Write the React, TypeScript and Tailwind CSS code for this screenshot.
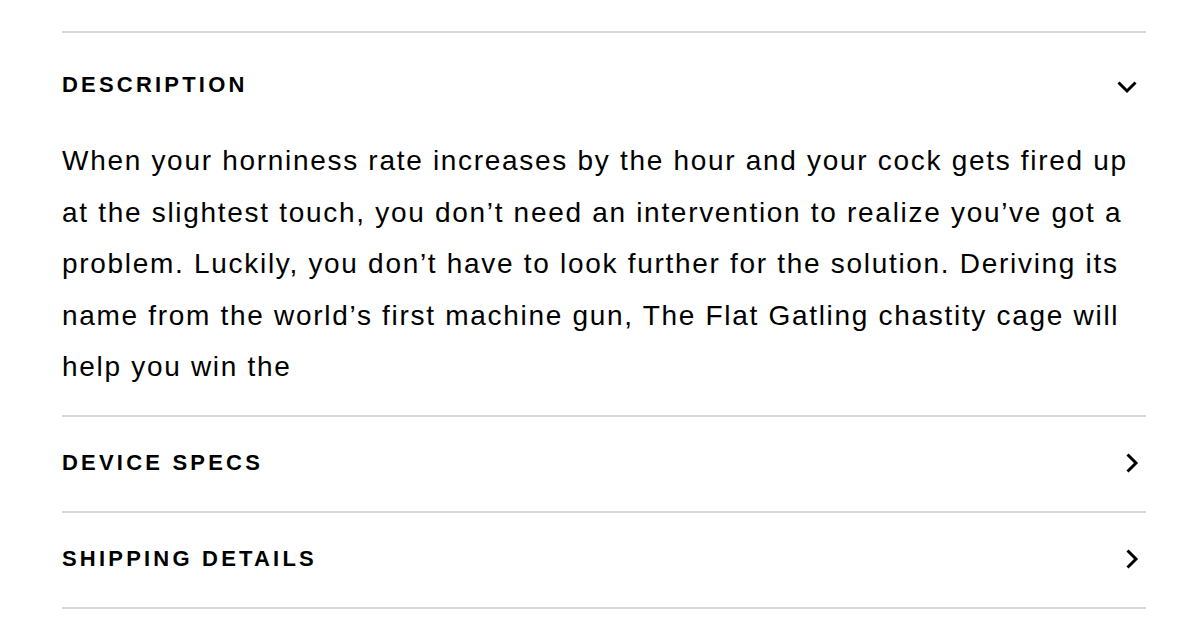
import { useState } from "react";

type Section = {
  title: string;
  body?: string;
};

const sections: Section[] = [
  {
    title: "Description",
    body:
      "When your horniness rate increases by the hour and your cock gets fired up at the slightest touch, you don\u2019t need an intervention to realize you\u2019ve got a problem. Luckily, you don\u2019t have to look further for the solution. Deriving its name from the world\u2019s first machine gun, The Flat Gatling chastity cage will help you win the",
  },
  { title: "Device Specs" },
  { title: "Shipping Details" },
];

function ChevronDown() {
  return (
    <svg viewBox="0 0 24 24" className="mr-[7px] mt-[2px] -mb-[2px] h-6 w-6 shrink-0" fill="none" stroke="#000" strokeWidth="3">
      <path d="M3.5 7.5L12 16l8.5-8.5" />
    </svg>
  );
}

function ChevronRight() {
  return (
    <svg viewBox="0 0 24 24" className="mr-[2px] -my-[1px] h-6 w-6 shrink-0" fill="none" stroke="#000" strokeWidth="3">
      <path d="M7.5 3.5L16 12l-8.5 8.5" />
    </svg>
  );
}

export default function App() {
  const [open, setOpen] = useState(0);

  return (
    <div className="min-h-[644px] bg-white pl-[62px] font-['Liberation_Sans',Arial,sans-serif] text-black">
      <div className="w-[1084px] pt-[31px]">
        {sections.map((s, i) => {
          const isOpen = open === i;
          return (
            <div key={s.title} className={["border-t-2 border-[#d6d6d6]", i === sections.length - 1 ? "border-b-2" : ""].join(" ")}>
              <button
                type="button"
                onClick={() => setOpen(isOpen ? -1 : i)}
                className={[
                  "flex w-full items-center justify-between text-left",
                  isOpen ? "pt-[40px]" : "pt-[35px] pb-[37px]",
                ].join(" ")}
              >
                <span className="text-[22px] leading-[22px] font-bold uppercase tracking-[3.2px]">{s.title}</span>
                {isOpen ? <ChevronDown /> : <ChevronRight />}
              </button>
              {isOpen && s.body && (
                <p className="pt-[38px] pb-[22.5px] text-[28px] leading-[51.5px] tracking-[1.7px]">{s.body}</p>
              )}
            </div>
          );
        })}
      </div>
    </div>
  );
}
